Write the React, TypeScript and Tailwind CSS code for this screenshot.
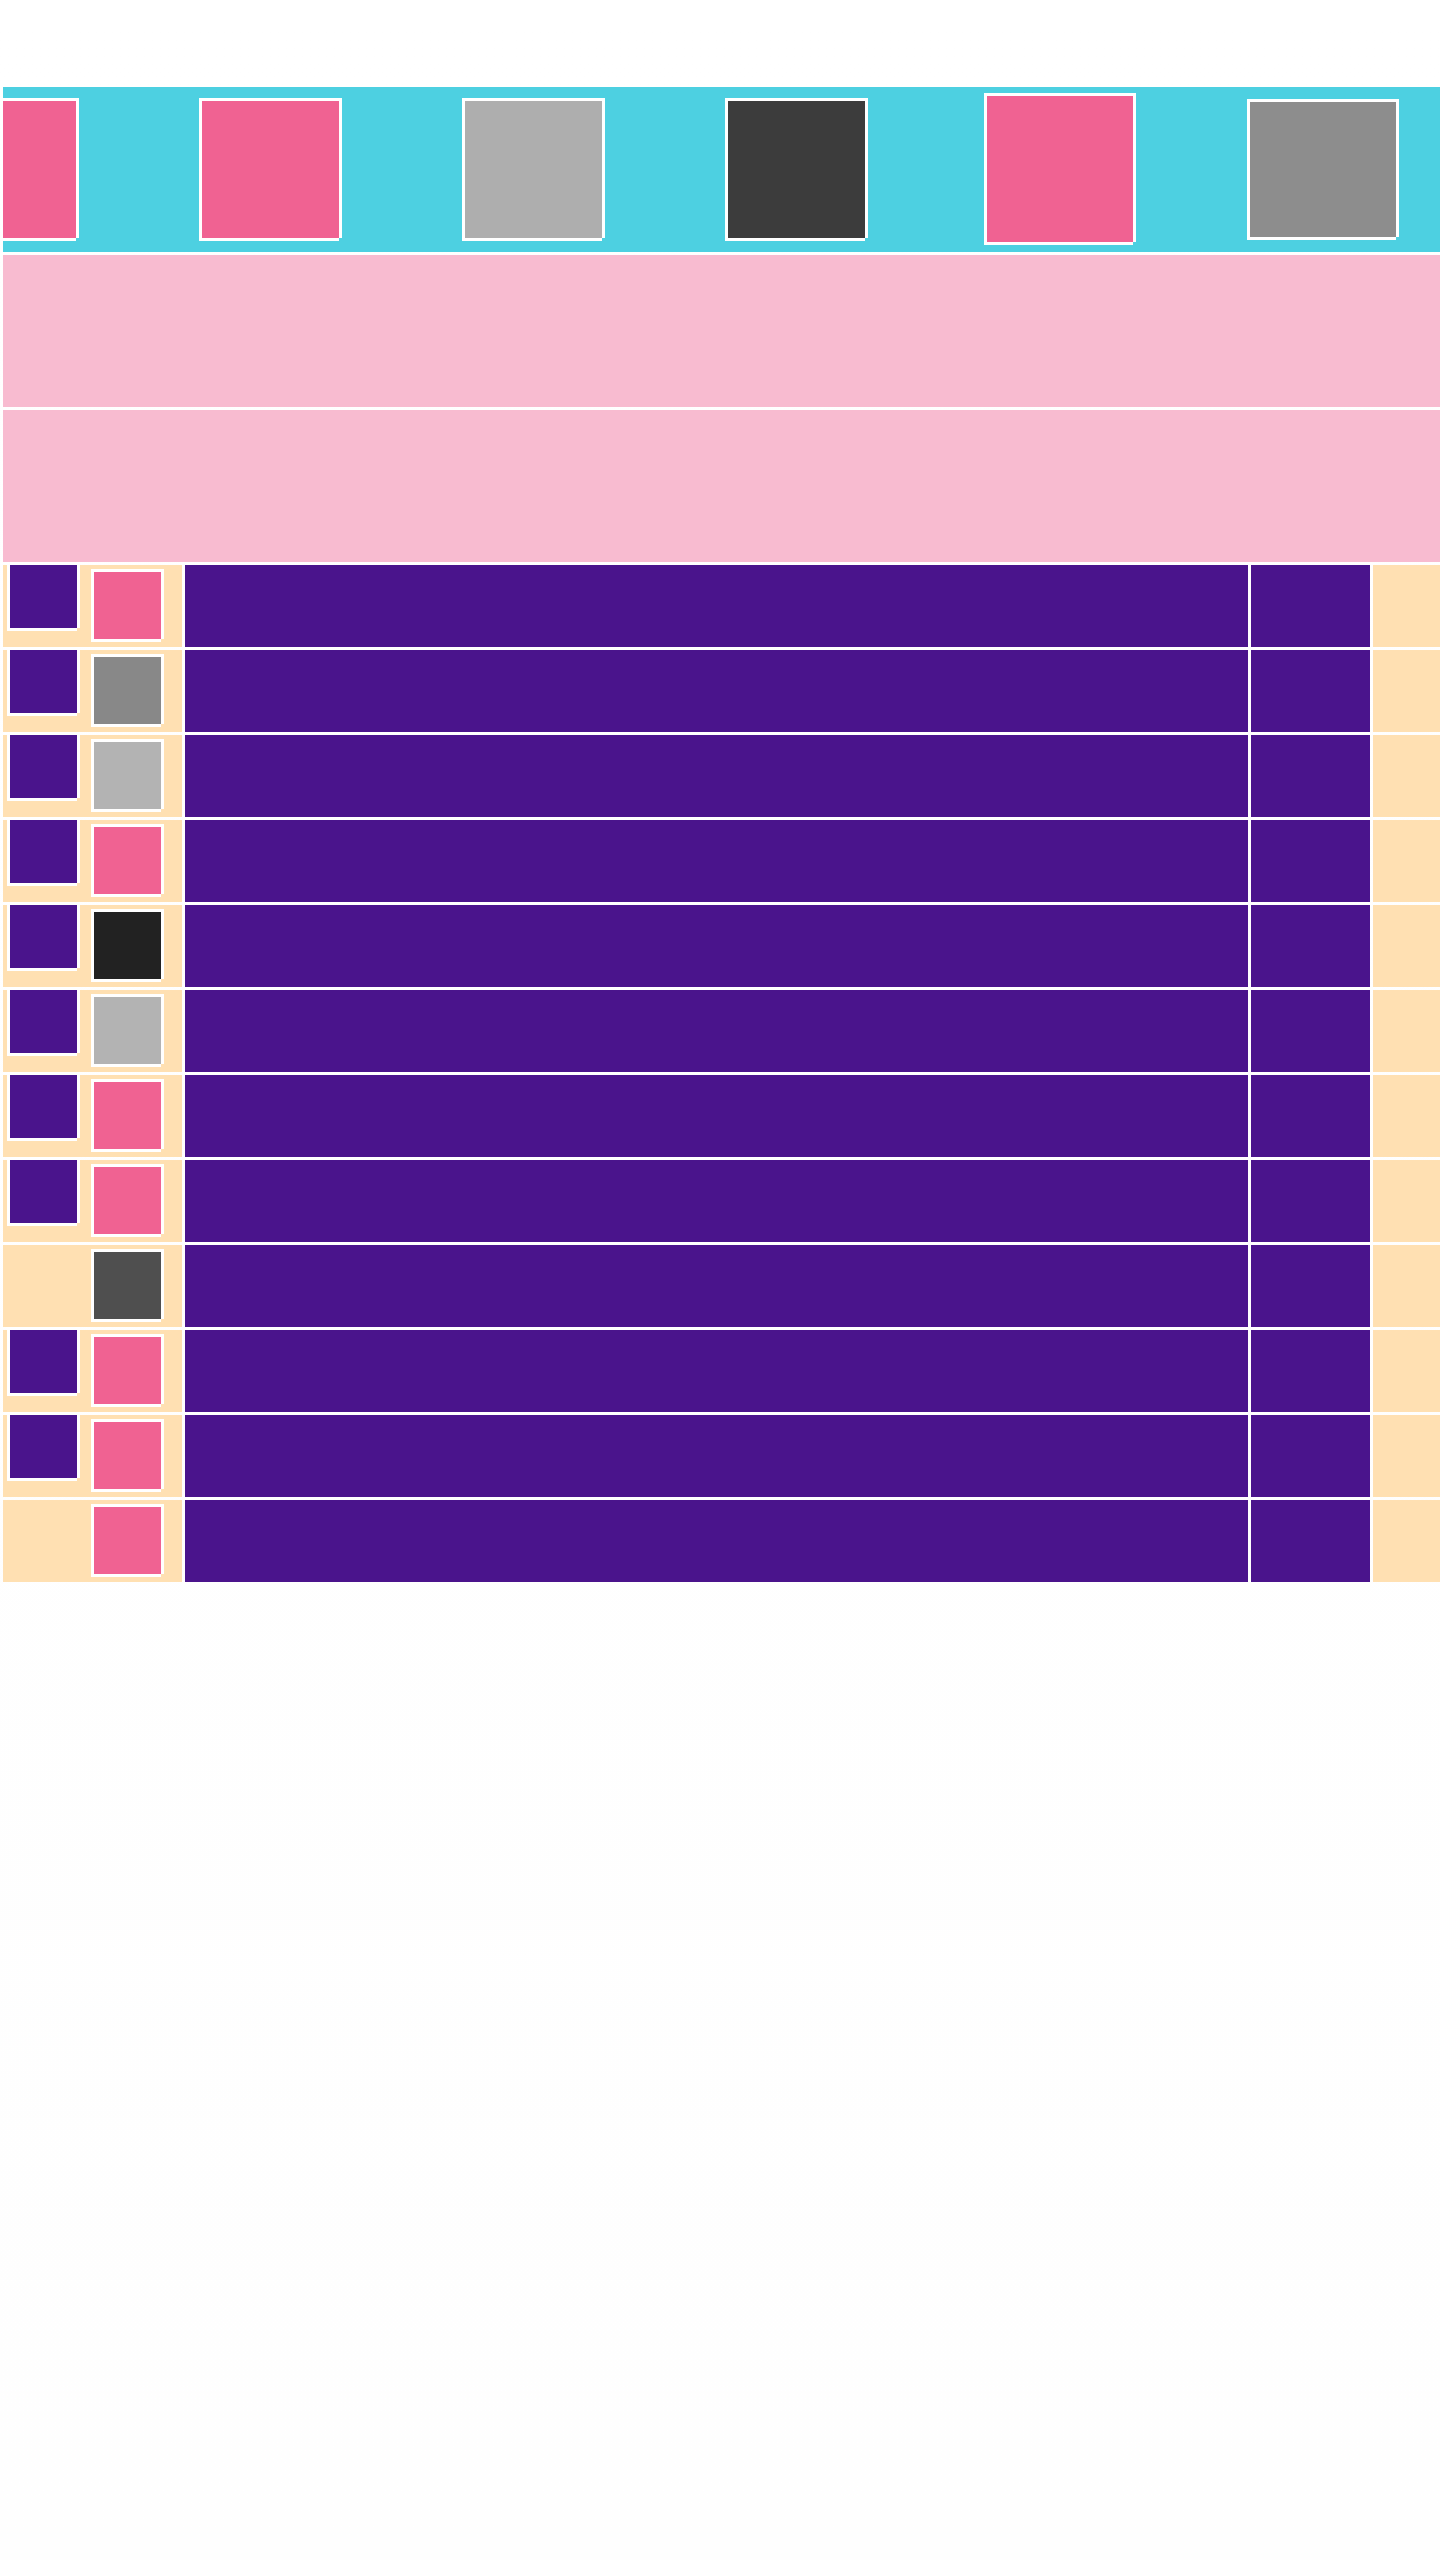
import React from 'react';

const frame = 'border-t-[3px] border-l-[3px] border-white shadow-[3px_0_0_#ffffff,0_3px_0_#ffffff]';

const banners = [
  { color: 'bg-[#f06292]', box: 'ml-[61px] mt-[11px] w-[140px] h-[140px]' },
  { color: 'bg-[#f06292]', box: 'ml-[61px] mt-[11px] w-[140px] h-[140px]' },
  { color: 'bg-[#aeaeae]', box: 'ml-[61px] mt-[11px] w-[140px] h-[140px]' },
  { color: 'bg-[#3c3c3c]', box: 'ml-[61px] mt-[11px] w-[140px] h-[140px]' },
  { color: 'bg-[#f06292]', box: 'ml-[57px] mt-[6px] w-[149px] h-[149px]' },
  { color: 'bg-[#8d8d8d]', box: 'ml-[57px] mt-[12px] w-[149px] h-[138px]' },
];

const rows = [
  { avatar: true, thumb: 'bg-[#f06292]' },
  { avatar: true, thumb: 'bg-[#888888]' },
  { avatar: true, thumb: 'bg-[#b3b3b3]' },
  { avatar: true, thumb: 'bg-[#f06292]' },
  { avatar: true, thumb: 'bg-[#222222]' },
  { avatar: true, thumb: 'bg-[#b3b3b3]' },
  { avatar: true, thumb: 'bg-[#f06292]' },
  { avatar: true, thumb: 'bg-[#f06292]' },
  { avatar: false, thumb: 'bg-[#4f4f4f]' },
  { avatar: true, thumb: 'bg-[#f06292]' },
  { avatar: true, thumb: 'bg-[#f06292]' },
  { avatar: false, thumb: 'bg-[#f06292]' },
];

export default function App() {
  return (
    <div className="min-h-[2560px] bg-linear-to-b from-white to-[#fefefe] pl-[3px] pt-[87px] overflow-hidden">
      <div className="flex flex-col gap-[3px]">

        {/* Banner strip */}
        <div className="h-[165px] bg-[#4dd0e1] overflow-hidden">
          <div className="flex -ml-[128px]">
            {banners.map((item, index) => (
              <div key={index} className="w-[263px] shrink-0">
                <div className={`${frame} ${item.box} ${item.color}`}></div>
              </div>
            ))}
          </div>
        </div>

        {/* Pink bands */}
        <div className="h-[152px] bg-[#f8bbd0]"></div>
        <div className="h-[152px] bg-[#f8bbd0]"></div>

        {/* List rows */}
        {rows.map((row, index) => (
          <div key={index} className="flex gap-[3px] h-[82px]">
            <div className="w-[179px] shrink-0 bg-[#ffe0b2] pl-[4px] grid grid-cols-[84px_70px] items-start">
              <div>
                {row.avatar && <div className={`${frame} -mt-[3px] w-[70px] h-[66px] bg-[#4a148c]`}></div>}
              </div>
              <div className={`${frame} mt-[4px] w-[70px] h-[70px] ${row.thumb}`}></div>
            </div>
            <div className="w-[1063px] shrink-0 bg-[#4a148c]"></div>
            <div className="w-[119px] shrink-0 bg-[#4a148c]"></div>
            <div className="flex-1 bg-[#ffe0b2]"></div>
          </div>
        ))}

      </div>
    </div>
  );
}
